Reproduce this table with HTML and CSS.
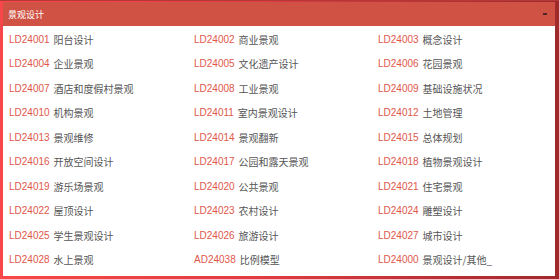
FILE: index.html
```html
<!DOCTYPE html>
<html>
<head>
<meta charset="utf-8">
<link rel="stylesheet" href="styles.css">
</head>
<body>
<div class="frame">
  <div class="panel">
    <div class="head">
      <span class="title">景观设计</span>
      <span class="collapse"></span>
    </div>
    <div class="grid">
      <div class="item"><span class="code">LD24001</span><span class="name">阳台设计</span></div>
      <div class="item"><span class="code">LD24002</span><span class="name">商业景观</span></div>
      <div class="item"><span class="code">LD24003</span><span class="name">概念设计</span></div>
      <div class="item"><span class="code">LD24004</span><span class="name">企业景观</span></div>
      <div class="item"><span class="code">LD24005</span><span class="name">文化遗产设计</span></div>
      <div class="item"><span class="code">LD24006</span><span class="name">花园景观</span></div>
      <div class="item"><span class="code">LD24007</span><span class="name">酒店和度假村景观</span></div>
      <div class="item"><span class="code">LD24008</span><span class="name">工业景观</span></div>
      <div class="item"><span class="code">LD24009</span><span class="name">基础设施状况</span></div>
      <div class="item"><span class="code">LD24010</span><span class="name">机构景观</span></div>
      <div class="item"><span class="code">LD24011</span><span class="name">室内景观设计</span></div>
      <div class="item"><span class="code">LD24012</span><span class="name">土地管理</span></div>
      <div class="item"><span class="code">LD24013</span><span class="name">景观维修</span></div>
      <div class="item"><span class="code">LD24014</span><span class="name">景观翻新</span></div>
      <div class="item"><span class="code">LD24015</span><span class="name">总体规划</span></div>
      <div class="item"><span class="code">LD24016</span><span class="name">开放空间设计</span></div>
      <div class="item"><span class="code">LD24017</span><span class="name">公园和露天景观</span></div>
      <div class="item"><span class="code">LD24018</span><span class="name">植物景观设计</span></div>
      <div class="item"><span class="code">LD24019</span><span class="name">游乐场景观</span></div>
      <div class="item"><span class="code">LD24020</span><span class="name">公共景观</span></div>
      <div class="item"><span class="code">LD24021</span><span class="name">住宅景观</span></div>
      <div class="item"><span class="code">LD24022</span><span class="name">屋顶设计</span></div>
      <div class="item"><span class="code">LD24023</span><span class="name">农村设计</span></div>
      <div class="item"><span class="code">LD24024</span><span class="name">雕塑设计</span></div>
      <div class="item"><span class="code">LD24025</span><span class="name">学生景观设计</span></div>
      <div class="item"><span class="code">LD24026</span><span class="name">旅游设计</span></div>
      <div class="item"><span class="code">LD24027</span><span class="name">城市设计</span></div>
      <div class="item"><span class="code">LD24028</span><span class="name">水上景观</span></div>
      <div class="item"><span class="code">AD24038</span><span class="name">比例模型</span></div>
      <div class="item"><span class="code">LD24000</span><span class="name">景观设计/其他_</span></div>
    </div>
  </div>
</div>
</body>
</html>
```

FILE: styles.css
```css
html, body {
  margin: 0;
  padding: 0;
  background: #ffffff;
}
.frame {
  width: 559px;
  height: 279px;
  box-sizing: border-box;
  padding: 1px 4px 3px 3px;
  background: linear-gradient(to right, #f7474a 0%, #e23c40 45%, #9e2a2c 100%);
  border-top: 1px solid #b2383a;
}
.panel {
  background: #ffffff;
  height: 100%;
  display: flex;
  flex-direction: column;
}
.head {
  height: 24px;
  background: #cf5244;
  display: flex;
  align-items: center;
  justify-content: space-between;
  padding: 0 8px 0 5px;
}
.title {
  font-family: "Noto Sans CJK SC", sans-serif;
  font-size: 9px;
  color: #ffffff;
  line-height: 1;
}
.collapse {
  width: 4px;
  height: 2px;
  background: #4a2a26;
}
.grid {
  display: grid;
  grid-template-columns: 185px 184px 1fr;
  grid-auto-rows: 24.5px;
  padding: 1px 0 0 6px;
}
.item {
  display: flex;
  align-items: center;
  gap: 4px;
  white-space: nowrap;
}
.code {
  font-family: "Liberation Sans", Arial, sans-serif;
  font-size: 10px;
  color: #df574b;
}
.name {
  font-family: "Noto Sans CJK SC", sans-serif;
  font-size: 10px;
  color: #555555;
}
```
